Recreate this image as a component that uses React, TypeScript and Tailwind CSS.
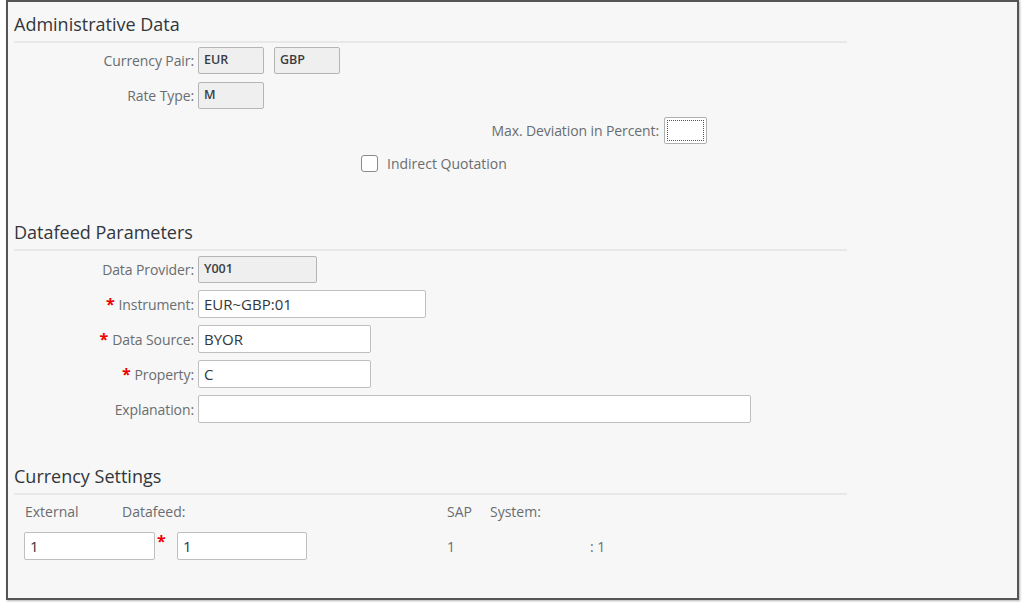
import React from 'react';

const font = { fontFamily: '"Open Sans", "Liberation Sans", sans-serif' };

function Heading({ title, top }: { title: string; top: string }) {
  return (
    <div className={`${top} mr-[170px] pt-[10px] pb-[5px] border-b-2 border-[#e8e8e8]`}>
      <h2 className="text-[18px] leading-[24px] text-[#32363a]">{title}</h2>
    </div>
  );
}

function Req() {
  return <span className="text-[#e00] font-bold text-[16px] mr-[4px] leading-none">*</span>;
}

function Label({ children, req }: { children: React.ReactNode; req?: boolean }) {
  return (
    <div className="w-[184px] shrink-0 text-right text-[14px] tracking-[-0.1px] text-[#6a6d70] pr-[4px] flex items-center justify-end">
      {req && <Req />}
      {children}
    </div>
  );
}

function ReadBox({ value, w }: { value: string; w: string }) {
  return (
    <div
      className={`${w} h-[27px] bg-[#efefef] border border-[#b5b5b5] rounded-[2px] flex items-center px-[5px] text-[12.5px] font-semibold text-[#3a3d40]`}
    >
      {value}
    </div>
  );
}

function InBox({ value, w }: { value: string; w: string }) {
  return (
    <div
      className={`${w} h-[28px] bg-white border border-[#bfbfbf] rounded-[2px] flex items-center px-[5px] text-[15px] text-[#32363a]`}
    >
      {value}
    </div>
  );
}

export default function App() {
  return (
    <div className="w-[1024px] h-[609px] bg-white" style={font}>
      <div className="ml-[6px] w-[1013px] h-[600px] border-2 border-[#555] bg-[#f7f7f7] pl-[6px] shadow-[1px_1px_2px_rgba(0,0,0,0.3)]">
        <Heading title="Administrative Data" top="mt-0" />
        <div className="pt-[4px] flex flex-col gap-[8px]">
          <div className="flex items-center h-[27px]">
            <Label>Currency Pair:</Label>
            <ReadBox value="EUR" w="w-[66px]" />
            <div className="w-[10px]" />
            <ReadBox value="GBP" w="w-[66px]" />
          </div>
          <div className="flex items-center h-[27px]">
            <Label>Rate Type:</Label>
            <ReadBox value="M" w="w-[66px]" />
          </div>
          <div className="flex items-center h-[27px]">
            <div className="w-[650px] text-right text-[14px] tracking-[-0.1px] text-[#6a6d70] pr-[5px]">Max. Deviation in Percent:</div>
            <div className="w-[43px] h-[27px] rounded-[2px] border border-[#b0b0b0] bg-white p-[2px]">
              <div className="w-full h-full border border-dotted border-[#555]" />
            </div>
          </div>
          <div className="flex items-center h-[23px] pl-[347px]">
            <div className="w-[17px] h-[17px] rounded-[3px] border border-[#8a8a8a] bg-white" />
            <span className="ml-[9px] text-[14px] text-[#6a6d70]">Indirect Quotation</span>
          </div>
        </div>

        <Heading title="Datafeed Parameters" top="mt-[35px]" />
        <div className="pt-[4px] flex flex-col gap-[7px]">
          <div className="flex items-center h-[28px]">
            <Label>Data Provider:</Label>
            <ReadBox value="Y001" w="w-[119px]" />
          </div>
          <div className="flex items-center h-[28px]">
            <Label req>Instrument:</Label>
            <InBox value="EUR~GBP:01" w="w-[228px]" />
          </div>
          <div className="flex items-center h-[28px]">
            <Label req>Data Source:</Label>
            <InBox value="BYOR" w="w-[173px]" />
          </div>
          <div className="flex items-center h-[28px]">
            <Label req>Property:</Label>
            <InBox value="C" w="w-[173px]" />
          </div>
          <div className="flex items-center h-[28px]">
            <Label>Explanation:</Label>
            <InBox value="" w="w-[553px]" />
          </div>
        </div>

        <Heading title="Currency Settings" top="mt-[31px]" />
        <div className="mt-[6px] h-[20px] flex items-center text-[14px] text-[#6a6d70] pl-[11px]">
          <span className="w-[97px]">External</span>
          <span className="w-[325px]">Datafeed:</span>
          <span className="w-[43px]">SAP</span>
          <span>System:</span>
        </div>
        <div className="mt-[11px] h-[28px] flex items-center pl-[10px]">
          <InBox value="1" w="w-[131px]" />
          <span className="w-[22px] self-start pl-[2px] text-[#e00] font-bold text-[16px] leading-[18px]">*</span>
          <InBox value="1" w="w-[130px]" />
          <span className="ml-[140px] w-[143px] text-[14px] text-[#6a6d70]">1</span>
          <span className="text-[14px] text-[#6a6d70]">: 1</span>
        </div>
      </div>
    </div>
  );
}
